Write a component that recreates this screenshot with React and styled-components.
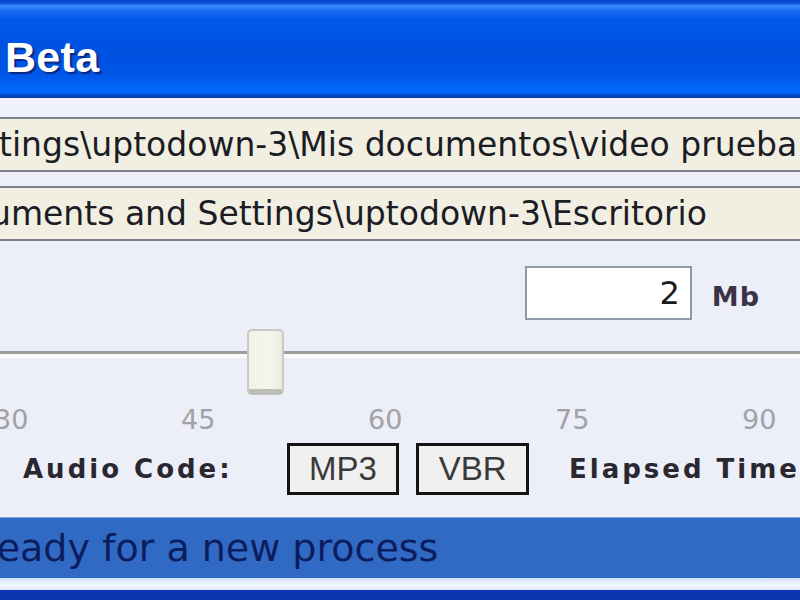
import React from "react";
import styled, { createGlobalStyle } from "styled-components";

const GlobalStyle = createGlobalStyle`
  html, body {
    margin: 0;
    padding: 0;
    width: 800px;
    height: 600px;
    overflow: hidden;
    background: #eceef8;
  }
`;

const Window = styled.div`
  width: 800px;
  height: 600px;
  display: flex;
  flex-direction: column;
  overflow: hidden;
  background: #eceef8;
  font-family: "DejaVu Sans", Verdana, sans-serif;
`;

const TitleBar = styled.div`
  height: 98px;
  flex-shrink: 0;
  display: flex;
  align-items: center;
  padding: 16px 0 0 5px;
  box-sizing: border-box;
  background: linear-gradient(
    to bottom,
    #0a45c8 0px,
    #0a4fd8 3px,
    #3a8cfc 6px,
    #1a6af5 11px,
    #0058ea 20px,
    #0052e0 50px,
    #0055e6 75px,
    #0068fc 88px,
    #0062f2 93px,
    #0045c0 96px,
    #003a9e 98px
  );
`;

const Title = styled.h1`
  margin: 0;
  font-family: "Liberation Sans", Arial, sans-serif;
  font-weight: bold;
  font-size: 43px;
  color: #ffffff;
  text-shadow: 2px 2px 1px #0a2a80;
  letter-spacing: 0.3px;
`;

const Body = styled.div`
  flex: 1;
  display: flex;
  flex-direction: column;
  background: linear-gradient(to bottom, #f1f4fd 0px, #eef1fb 16px, #eceef8 40px);
  padding-top: 19px;
`;

const PathField = styled.div`
  height: 55px;
  box-sizing: border-box;
  margin-bottom: ${(p) => p.$gap || 0}px;
  background: #f1efe2;
  border-top: 2px solid #7c7f88;
  border-bottom: 2px solid #7c7f88;
  display: flex;
  align-items: center;
  white-space: nowrap;
  overflow: hidden;
  font-size: 33px;
  color: #1c1c24;
  text-indent: ${(p) => p.$indent || 0}px;
`;

const SizeRow = styled.div`
  display: flex;
  align-items: center;
  justify-content: flex-end;
  padding-right: 40px;
  margin-top: 25px;
  gap: 20px;
`;

const NumberBox = styled.div`
  width: 167px;
  height: 54px;
  box-sizing: border-box;
  background: #ffffff;
  border: 2px solid #8e99aa;
  display: flex;
  align-items: center;
  justify-content: flex-end;
  padding-right: 10px;
  font-size: 32px;
  color: #1a1a1a;
`;

const Unit = styled.span`
  font-size: 27px;
  font-weight: bold;
  color: #3a3346;
  letter-spacing: 1px;
  margin-top: 6px;
`;

const SliderArea = styled.div`
  position: relative;
  height: 75px;
  margin-top: 9px;
`;

const Track = styled.div`
  position: absolute;
  left: 0;
  right: 0;
  top: 22px;
  height: 3px;
  background: #9c9c9c;
  border-bottom: 4px solid #fbfbfb;
`;

const Thumb = styled.div`
  position: absolute;
  left: 247px;
  top: 0;
  width: 37px;
  height: 66px;
  box-sizing: border-box;
  background: linear-gradient(to right, #f3f2e6, #f6f5ec 60%, #ecebe0);
  border: 2px solid #c9c9c4;
  border-bottom: 6px solid #bdbdb8;
  border-radius: 5px;
`;

const Ticks = styled.div`
  display: flex;
  height: 38px;
  align-items: flex-start;
  margin-left: -6px;
`;

const Tick = styled.span`
  flex: 0 0 187px;
  font-size: 27px;
  color: #a2a2a6;
  text-align: left;
`;

const CodecRow = styled.div`
  display: flex;
  align-items: center;
  height: 52px;
  margin-top: 1px;
`;

const Label = styled.span`
  font-size: 26px;
  font-weight: bold;
  letter-spacing: 3px;
  color: #2a2730;
  margin-left: ${(p) => p.$left || 0}px;
  white-space: nowrap;
`;

const CodecBox = styled.div`
  width: 114px;
  height: 52px;
  box-sizing: border-box;
  border: 3px solid #141414;
  background: #f0f0f0;
  display: flex;
  align-items: center;
  justify-content: center;
  font-family: "Liberation Sans", Arial, sans-serif;
  font-size: 33px;
  color: #3a3a3a;
  margin-left: ${(p) => p.$left || 0}px;
`;

const StatusBar = styled.div`
  margin-top: 22px;
  height: 60px;
  flex-shrink: 0;
  background: #316ac5;
  border-top: 1px solid #7fa5e0;
  display: flex;
  align-items: center;
  white-space: nowrap;
  overflow: hidden;
  font-size: 38px;
  color: #0c1d5e;
  text-indent: -28px;
`;

const BottomEdge = styled.div`
  height: 12px;
  background: linear-gradient(to bottom, #cfe0fa, #f4f8ff 60%, #dfe9fb);
  flex-shrink: 0;
`;

const Frame = styled.div`
  flex: 1;
  background: #0a34b0;
`;

export default function App() {
  return (
    <Window>
      <GlobalStyle />
      <TitleBar>
        <Title>Beta</Title>
      </TitleBar>
      <Body>
        <PathField $gap={14} $indent={-1}>
          tings\uptodown-3\Mis documentos\video prueba
        </PathField>
        <PathField $indent={-10}>
          uments and Settings\uptodown-3\Escritorio
        </PathField>
        <SizeRow>
          <NumberBox>2</NumberBox>
          <Unit>Mb</Unit>
        </SizeRow>
        <SliderArea>
          <Track />
          <Thumb />
        </SliderArea>
        <Ticks>
          <Tick>30</Tick>
          <Tick>45</Tick>
          <Tick>60</Tick>
          <Tick>75</Tick>
          <Tick>90</Tick>
        </Ticks>
        <CodecRow>
          <Label $left={23}>Audio Code:</Label>
          <CodecBox $left={54}>MP3</CodecBox>
          <CodecBox $left={17}>VBR</CodecBox>
          <Label $left={40}>Elapsed Time</Label>
        </CodecRow>
        <StatusBar>Ready for a new process</StatusBar>
        <BottomEdge />
        <Frame />
      </Body>
    </Window>
  );
}
